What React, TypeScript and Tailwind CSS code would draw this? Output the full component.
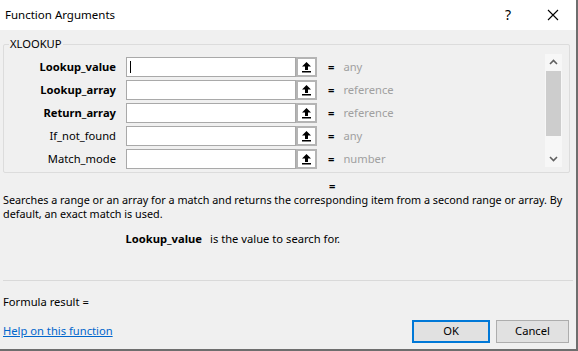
import React from "react";

type Arg = {
	name: string;
	bold: boolean;
	value: string;
};

const args: Arg[] = [
	{ name: "Lookup_value", bold: true, value: "any" },
	{ name: "Lookup_array", bold: true, value: "reference" },
	{ name: "Return_array", bold: true, value: "reference" },
	{ name: "If_not_found", bold: false, value: "any" },
	{ name: "Match_mode", bold: false, value: "number" },
];

function CollapseIcon() {
	// little arrow pointing up at a bar, the "collapse dialog" glyph
	return (
		<svg width="11" height="12" viewBox="0 0 11 12" aria-hidden="true">
			<path d="M5.5 1 L10 5.5 L7 5.5 L7 9 L4 9 L4 5.5 L1 5.5 Z" fill="#000" />
			<rect x="1" y="10" width="9" height="1.5" fill="#000" />
		</svg>
	);
}

function Chevron({ up }: { up: boolean }) {
	return (
		<svg width="9" height="6" viewBox="0 0 9 6" aria-hidden="true">
			<path
				d={up ? "M1 5 L4.5 1.5 L8 5" : "M1 1 L4.5 4.5 L8 1"}
				fill="none"
				stroke="#606060"
				strokeWidth="1.6"
			/>
		</svg>
	);
}

export default function App() {
	const [values, setValues] = React.useState<string[]>(["", "", "", "", ""]);

	const handleChange = (index: number, text: string) => {
		const next = [...values];
		next[index] = text;
		setValues(next);
	};

	return (
		<div
			className="w-[578px] h-[351px] bg-[#f0f0f0] text-[11.2px] text-black flex flex-col border-r-2 border-b-2 border-[#6e6e6e] overflow-hidden"
			style={{ fontFamily: '"Noto Sans", "Open Sans", sans-serif' }}
		>
			{/* title bar */}
			<div className="h-[30px] bg-white flex items-center pl-[5px] shrink-0">
				<span className="leading-none text-[11.5px]">Function Arguments</span>
				<span className="ml-auto mr-[36px] text-[14px] leading-none">?</span>
				<svg width="12" height="12" viewBox="0 0 12 12" className="mr-[17px]">
					<path d="M1 1 L11 11 M11 1 L1 11" stroke="#000" strokeWidth="1.1" />
				</svg>
			</div>

			{/* argument group */}
			<fieldset className="mx-[3px] mt-[6px] mr-[6px] border border-[#dcdcdc] rounded-[2px] pb-[3px]">
				<legend className="ml-[5px] px-[1px] leading-[16px]">XLOOKUP</legend>
				<div className="flex">
					<div className="flex flex-col gap-[3px] pt-[5px]">
						{args.map((arg, i) => (
							<div key={arg.name} className="flex items-center h-[20px]">
								<div
									className={`w-[113px] text-right pr-[1px] ${arg.bold ? "font-bold" : ""}`}
								>
									{arg.name}
								</div>
								<div className="ml-[9px] w-[170px] h-[20px] bg-white border border-[#a9a9a9] relative">
									<input
										value={values[i]}
										onChange={(e) => handleChange(i, e.target.value)}
										className="w-full h-full px-[3px] outline-none bg-transparent"
									/>
									{i === 0 && (
										<div className="absolute left-[3px] top-[3px] w-[1px] h-[12px] bg-black" />
									)}
								</div>
								<button
									type="button"
									className="w-[21px] h-[20px] border-2 border-[#b4b4b4] bg-white flex items-center justify-center"
								>
									<CollapseIcon />
								</button>
								<span className="ml-[11px] font-bold">=</span>
								<span className="ml-[9px] text-[#a0a0a0]">{arg.value}</span>
							</div>
						))}
					</div>
					<div className="ml-auto mr-[7px] mt-[2px] w-[17px] h-[113px] bg-[#f7f7f7] flex flex-col items-center">
						<div className="h-[16px] flex items-center">
							<Chevron up />
						</div>
						<div className="w-[15px] h-[65px] bg-[#cdcdcd] mt-[1px]" />
						<div className="mt-auto h-[16px] flex items-center">
							<Chevron up={false} />
						</div>
					</div>
				</div>
			</fieldset>

			{/* description */}
			<div className="pl-[329px] mt-[6px] leading-[14px] font-bold">=</div>
			<div className="px-[3px] text-[10.8px] leading-[14px] whitespace-nowrap">
				<div>
					Searches a range or an array for a match and returns the corresponding item from a second range or array. By
				</div>
				<div>default, an exact match is used.</div>
			</div>
			<div className="flex mt-[11px] leading-[14px]">
				<span className="w-[210px] pr-[8px] text-right font-bold">Lookup_value</span>
				<span>is the value to search for.</span>
			</div>

			<div className="mt-auto mx-[3px] border-t border-[#d9d9d9]" />
			<div className="px-[3px] mt-[14px] leading-[14px]">Formula result =</div>
			<div className="flex items-center px-[3px] mt-[11px] mb-[6px]">
				<a href="#help" className="text-[#0066cc] underline">
					Help on this function
				</a>
				<button
					type="button"
					className="ml-auto w-[78px] h-[23px] bg-[#e1e1e1] border-2 border-[#0078d7]"
				>
					OK
				</button>
				<button
					type="button"
					className="ml-[6px] mr-[4px] w-[73px] h-[23px] bg-[#e1e1e1] border border-[#adadad]"
				>
					Cancel
				</button>
			</div>
		</div>
	);
}
